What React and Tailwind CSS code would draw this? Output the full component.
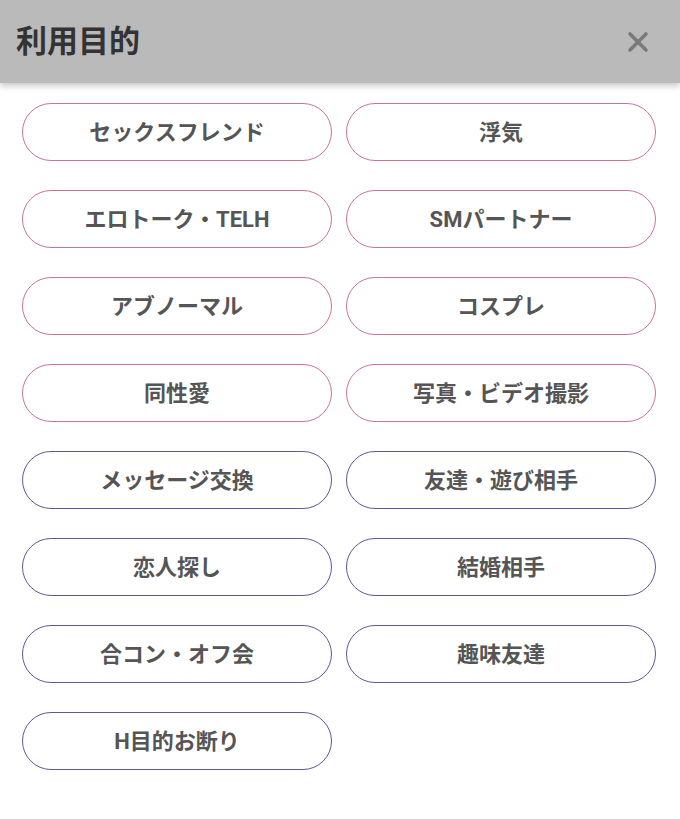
import React from 'react';

const PURPOSES = [
  { label: 'セックスフレンド', adult: true },
  { label: '浮気', adult: true },
  { label: 'エロトーク・TELH', adult: true },
  { label: 'SMパートナー', adult: true },
  { label: 'アブノーマル', adult: true },
  { label: 'コスプレ', adult: true },
  { label: '同性愛', adult: true },
  { label: '写真・ビデオ撮影', adult: true },
  { label: 'メッセージ交換', adult: false },
  { label: '友達・遊び相手', adult: false },
  { label: '恋人探し', adult: false },
  { label: '結婚相手', adult: false },
  { label: '合コン・オフ会', adult: false },
  { label: '趣味友達', adult: false },
  { label: 'H目的お断り', adult: false },
];

const App = () => {
  return (
    <div
      className="min-h-[819px] bg-white"
      style={{ fontFamily: '"Roboto", "Noto Sans CJK JP", sans-serif' }}
    >
      {/* Header */}
      <div className="relative z-10 flex h-[83px] items-center justify-between bg-[#bababa] pl-[16px] pr-[30px] shadow-[0_3px_6px_rgba(0,0,0,0.22)]">
        <h1 className="text-[31px] font-bold leading-none text-[#333333]">利用目的</h1>
        <button className="flex h-[24px] w-[24px] items-center justify-center">
          <svg width="22" height="22" viewBox="0 0 22 22">
            <path d="M3 3 L19 19 M19 3 L3 19" stroke="#7a7a7a" strokeWidth="3.6" strokeLinecap="round" />
          </svg>
        </button>
      </div>

      {/* Options */}
      <div className="grid grid-cols-2 gap-x-[14px] gap-y-[29px] pl-[22px] pr-[24px] pt-[20px]">
        {PURPOSES.map((item) => (
          <button
            key={item.label}
            className={
              'flex h-[58px] items-center justify-center rounded-full border-[1.5px] bg-white text-[22px] font-bold text-[#555555] ' +
              (item.adult ? 'border-[#c9739c]' : 'border-[#5f5896]')
            }
          >
            {item.label}
          </button>
        ))}
      </div>
    </div>
  );
};

export default App;
